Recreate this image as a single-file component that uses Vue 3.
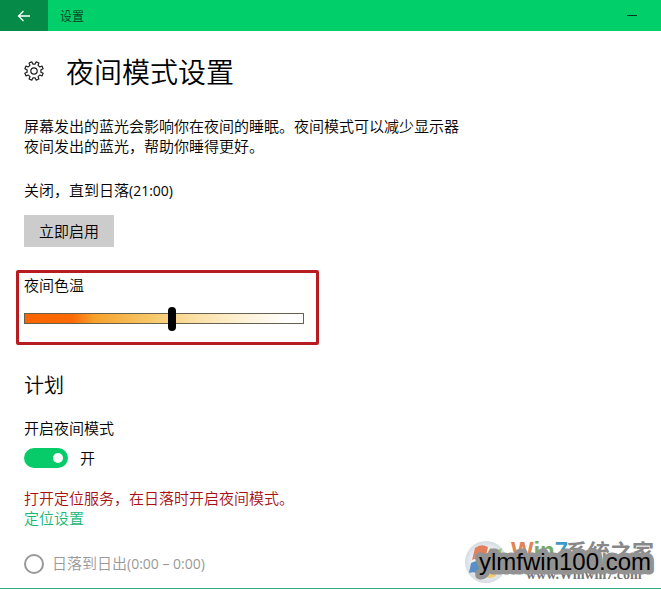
<template>
  <div class="settings-window">
    <header class="title-bar">
      <button class="back" type="button" aria-label="返回">
        <svg width="14" height="12" viewBox="0 0 14 12">
          <path d="M13 6H1.5M6.5 1L1.5 6L6.5 11" />
        </svg>
      </button>
      <span class="title">设置</span>
      <button class="minimize" type="button" aria-label="最小化">
        <svg width="12" height="12" viewBox="0 0 12 12">
          <path d="M1 5.5H11" />
        </svg>
      </button>
    </header>

    <main class="content">
      <div class="page-heading">
        <svg class="gear" width="20" height="20" viewBox="-10 -10 20 20">
          <path :d="gearPath" />
          <circle r="3.2" />
        </svg>
        <h1>夜间模式设置</h1>
      </div>

      <p class="description">屏幕发出的蓝光会影响你在夜间的睡眠。夜间模式可以减少显示器夜间发出的蓝光，帮助你睡得更好。</p>
      <p class="status">关闭，直到日落<span class="time">(21:00)</span></p>
      <button class="enable" type="button">立即启用</button>

      <section class="temperature">
        <label for="temperature">夜间色温</label>
        <input id="temperature" v-model="temperature" type="range" min="0" max="100" />
      </section>

      <h2>计划</h2>
      <label class="schedule-label" for="schedule">开启夜间模式</label>
      <div class="toggle-row">
        <input id="schedule" v-model="scheduled" class="toggle" type="checkbox" />
        <span>{{ scheduled ? "开" : "关" }}</span>
      </div>

      <p class="warning">打开定位服务，在日落时开启夜间模式。</p>
      <a class="location" href="#">定位设置</a>

      <label class="option">
        <input type="radio" name="range" disabled />
        <span>日落到日出<span class="time">(0:00 – 0:00)</span></span>
      </label>
    </main>

    <div class="watermark">
      <svg width="200" height="56" viewBox="0 0 200 56">
        <defs>
          <radialGradient id="orb">
            <stop offset="0.5" stop-color="#f6f8fa" />
            <stop offset="1" stop-color="#d5dce2" />
          </radialGradient>
        </defs>
        <circle cx="25" cy="30" r="21" fill="url(#orb)" />
        <path d="M14 16Q20 11 27 15L24 28Q18 24 11 28Z" fill="#e2805c" />
        <path d="M29 16Q35 20 41 16L38 29Q32 32 26 29Z" fill="#9cc272" />
        <path d="M10 31Q17 27 23 31L20 43Q14 39 8 41Z" fill="#5a8fc8" />
        <path d="M25 32Q32 35 38 32L35 44Q29 48 22 44Z" fill="#f2cd78" />
        <text class="brand" x="50" y="27">
          <tspan fill="#e08457">W</tspan><tspan fill="#79a95e">in</tspan><tspan fill="#3a9bc8">7</tspan>
        </text>
        <text class="brand-cn" x="105" y="28">系统之家</text>
        <text class="brand-url" x="65" y="47">www.Winwin7.com</text>
        <text class="site" x="18" y="38">ylmfwin100.com</text>
      </svg>
    </div>
  </div>
</template>

<script setup>
import { ref } from "vue";

const temperature = ref(53);
const scheduled = ref(true);

// Outline of the gear: eight teeth around the centre.
function point(radius, degrees) {
  const angle = (degrees * Math.PI) / 180;
  return `${(radius * Math.cos(angle)).toFixed(2)} ${(radius * Math.sin(angle)).toFixed(2)}`;
}

const corners = [];
for (let i = 0; i < 8; i++) {
  const a = i * 45 + 22.5;
  corners.push(point(7, a - 13), point(9.4, a - 9), point(9.4, a + 9), point(7, a + 13));
}
const gearPath = `M${corners.join("L")}Z`;
</script>

<style>
body {
  margin: 0;
  background: #fff;
}
</style>

<style scoped>
.settings-window {
  position: relative;
  box-sizing: border-box;
  min-height: 100vh;
  border-bottom: 1px solid #2fae7c;
  color: #000;
  font-family: "Noto Sans CJK SC", sans-serif;
  font-size: 15px;
  font-weight: 350;
  line-height: 20px;
}
button {
  border: 0;
  padding: 0;
  color: inherit;
  font: inherit;
}
h1,
h2,
p {
  margin: 0;
  font-weight: 350;
}
.title-bar {
  display: flex;
  align-items: center;
  height: 31px;
  background: #00cf6a;
}
.back {
  display: flex;
  align-items: center;
  justify-content: center;
  width: 48px;
  height: 31px;
  background: #068a48;
}
.back svg {
  fill: none;
  stroke: #fff;
  stroke-width: 1.3;
}
.title {
  flex: 1;
  padding-left: 12px;
  color: #073b20;
  font-size: 12px;
}
.minimize {
  display: flex;
  align-items: center;
  justify-content: center;
  width: 58px;
  height: 31px;
  background: transparent;
}
.minimize svg {
  stroke: #04381d;
}
.content {
  display: flex;
  flex-direction: column;
  align-items: flex-start;
  padding: 21px 24px 12px;
}
.page-heading {
  display: flex;
  align-items: center;
  gap: 22px;
}
.gear {
  fill: none;
  stroke: #222;
  stroke-width: 1.2;
  stroke-linejoin: round;
}
h1 {
  font-size: 28px;
  line-height: 38px;
}
.description {
  max-width: 440px;
  margin-top: 26px;
}
.status {
  margin-top: 24px;
}
.time {
  font-family: "Open Sans", sans-serif;
  font-size: 14px;
  font-weight: 400;
}
.enable {
  width: 90px;
  height: 32px;
  margin-top: 14px;
  background: #ccc;
}
.temperature {
  display: flex;
  flex-direction: column;
  gap: 11px;
  box-sizing: border-box;
  width: 303px;
  height: 75px;
  margin: 23px 0 0 -8px;
  padding: 2px 12px 0 5px;
  border: 3px solid #b71c20;
  border-radius: 2px;
}
.temperature input {
  width: 280px;
  height: 24px;
  margin: 0;
  background: transparent;
  appearance: none;
}
.temperature input::-webkit-slider-runnable-track {
  box-sizing: border-box;
  height: 11px;
  border: 1px solid #66604f;
  background: linear-gradient(90deg, #fa6400 0%, #fa6a05 17%, #f6a12c 25%, #f7c768 45%, #fbdc9b 58%, #fdf0d2 77%, #fff 95%);
}
.temperature input::-webkit-slider-thumb {
  width: 8px;
  height: 24px;
  margin-top: -7px;
  border-radius: 4px;
  background: #000;
  appearance: none;
}
h2 {
  margin-top: 26px;
  font-size: 20px;
  line-height: 28px;
}
.schedule-label {
  margin-top: 19px;
}
.toggle-row {
  display: flex;
  align-items: center;
  gap: 12px;
  margin-top: 10px;
}
.toggle {
  display: flex;
  align-items: center;
  justify-content: flex-end;
  box-sizing: border-box;
  width: 44px;
  height: 20px;
  margin: 0;
  padding: 0 5px;
  border-radius: 10px;
  background: #07cb69;
  appearance: none;
}
.toggle::before {
  width: 10px;
  height: 10px;
  border-radius: 50%;
  background: #fff;
  content: "";
}
.toggle:not(:checked) {
  justify-content: flex-start;
  background: #999;
}
.warning {
  margin-top: 20px;
  color: #a80f14;
}
.location {
  color: #18b774;
  text-decoration: none;
}
.option {
  display: flex;
  align-items: center;
  gap: 8px;
  margin-top: 25px;
  color: #999;
}
.option input {
  box-sizing: border-box;
  width: 20px;
  height: 20px;
  margin: 0;
  border: 2px solid #999;
  border-radius: 50%;
  appearance: none;
}
.watermark {
  position: absolute;
  right: 0;
  bottom: 0;
  height: 56px;
}
.brand {
  font: bold 24px "Liberation Sans", sans-serif;
}
.brand-cn {
  fill: #888;
  font: bold 22px "Noto Sans CJK SC", sans-serif;
}
.brand-url {
  fill: #777;
  font: bold 14px "Liberation Serif", serif;
}
.site {
  fill: #000;
  stroke: #929292;
  stroke-width: 9px;
  stroke-linejoin: round;
  paint-order: stroke;
  font: 24px "Liberation Sans", sans-serif;
}
</style>
